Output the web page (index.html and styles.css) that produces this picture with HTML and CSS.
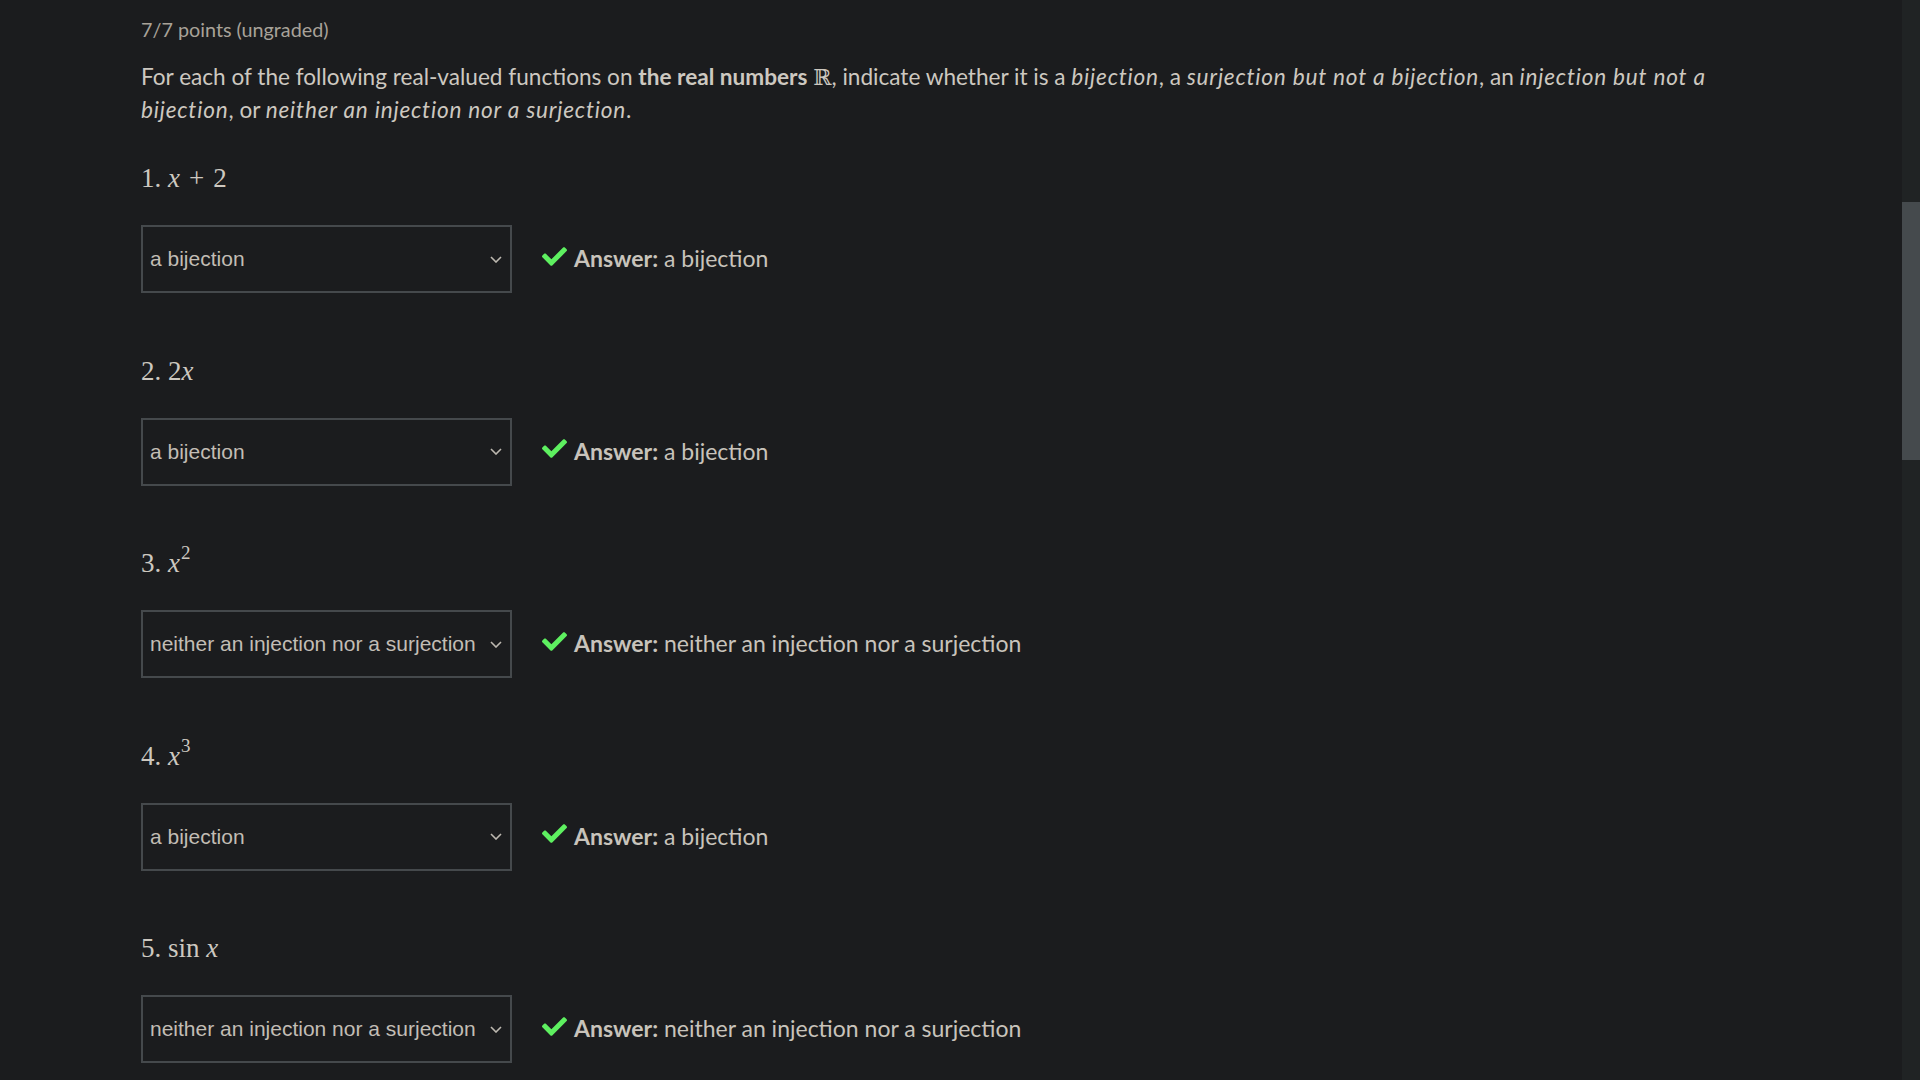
FILE: index.html
```html
<!DOCTYPE html>
<html lang="en">
<head>
<meta charset="utf-8">
<title>Problem</title>
<link rel="stylesheet" href="styles.css">
</head>
<body>
<main class="problem">
  <div class="points">7/7 points (ungraded)</div>
  <p class="prompt">For each of the following real-valued functions on <strong>the real numbers</strong> <span class="math">ℝ</span>, indicate whether it is a <em>bijection</em>, a <em>surjection but not a bijection</em>, an <em>injection but not a bijection</em>, or <em>neither an injection nor a surjection</em>.</p>

  <section class="item">
    <div class="label"><span class="math">1. <i>x</i><span class="op">+</span>2</span></div>
    <div class="row">
      <div class="select"><span class="value">a bijection</span><svg class="chev" viewBox="0 0 12 7" width="12" height="7"><path d="M1 1l5 5 5-5" fill="none" stroke="currentColor" stroke-width="1.6"/></svg></div>
      <div class="answer"><svg class="check" viewBox="0 64 512 384" width="25" height="19"><path d="M173.898 439.404l-166.4-166.4c-9.997-9.997-9.997-26.206 0-36.204l36.203-36.204c9.997-9.998 26.207-9.998 36.204 0L192 312.69 432.095 72.596c9.997-9.997 26.207-9.997 36.204 0l36.203 36.204c9.997 9.997 9.997 26.206 0 36.204l-294.4 294.401c-9.998 9.997-26.207 9.997-36.204-.001z" fill="currentColor"/></svg><b>Answer:</b> a bijection</div>
    </div>
  </section>

  <section class="item">
    <div class="label"><span class="math">2. 2<i>x</i></span></div>
    <div class="row">
      <div class="select"><span class="value">a bijection</span><svg class="chev" viewBox="0 0 12 7" width="12" height="7"><path d="M1 1l5 5 5-5" fill="none" stroke="currentColor" stroke-width="1.6"/></svg></div>
      <div class="answer"><svg class="check" viewBox="0 64 512 384" width="25" height="19"><path d="M173.898 439.404l-166.4-166.4c-9.997-9.997-9.997-26.206 0-36.204l36.203-36.204c9.997-9.998 26.207-9.998 36.204 0L192 312.69 432.095 72.596c9.997-9.997 26.207-9.997 36.204 0l36.203 36.204c9.997 9.997 9.997 26.206 0 36.204l-294.4 294.401c-9.998 9.997-26.207 9.997-36.204-.001z" fill="currentColor"/></svg><b>Answer:</b> a bijection</div>
    </div>
  </section>

  <section class="item">
    <div class="label"><span class="math">3. <i>x</i><sup>2</sup></span></div>
    <div class="row">
      <div class="select"><span class="value">neither an injection nor a surjection</span><svg class="chev" viewBox="0 0 12 7" width="12" height="7"><path d="M1 1l5 5 5-5" fill="none" stroke="currentColor" stroke-width="1.6"/></svg></div>
      <div class="answer"><svg class="check" viewBox="0 64 512 384" width="25" height="19"><path d="M173.898 439.404l-166.4-166.4c-9.997-9.997-9.997-26.206 0-36.204l36.203-36.204c9.997-9.998 26.207-9.998 36.204 0L192 312.69 432.095 72.596c9.997-9.997 26.207-9.997 36.204 0l36.203 36.204c9.997 9.997 9.997 26.206 0 36.204l-294.4 294.401c-9.998 9.997-26.207 9.997-36.204-.001z" fill="currentColor"/></svg><b>Answer:</b> neither an injection nor a surjection</div>
    </div>
  </section>

  <section class="item">
    <div class="label"><span class="math">4. <i>x</i><sup>3</sup></span></div>
    <div class="row">
      <div class="select"><span class="value">a bijection</span><svg class="chev" viewBox="0 0 12 7" width="12" height="7"><path d="M1 1l5 5 5-5" fill="none" stroke="currentColor" stroke-width="1.6"/></svg></div>
      <div class="answer"><svg class="check" viewBox="0 64 512 384" width="25" height="19"><path d="M173.898 439.404l-166.4-166.4c-9.997-9.997-9.997-26.206 0-36.204l36.203-36.204c9.997-9.998 26.207-9.998 36.204 0L192 312.69 432.095 72.596c9.997-9.997 26.207-9.997 36.204 0l36.203 36.204c9.997 9.997 9.997 26.206 0 36.204l-294.4 294.401c-9.998 9.997-26.207 9.997-36.204-.001z" fill="currentColor"/></svg><b>Answer:</b> a bijection</div>
    </div>
  </section>

  <section class="item">
    <div class="label"><span class="math">5. sin <i>x</i></span></div>
    <div class="row">
      <div class="select"><span class="value">neither an injection nor a surjection</span><svg class="chev" viewBox="0 0 12 7" width="12" height="7"><path d="M1 1l5 5 5-5" fill="none" stroke="currentColor" stroke-width="1.6"/></svg></div>
      <div class="answer"><svg class="check" viewBox="0 64 512 384" width="25" height="19"><path d="M173.898 439.404l-166.4-166.4c-9.997-9.997-9.997-26.206 0-36.204l36.203-36.204c9.997-9.998 26.207-9.998 36.204 0L192 312.69 432.095 72.596c9.997-9.997 26.207-9.997 36.204 0l36.203 36.204c9.997 9.997 9.997 26.206 0 36.204l-294.4 294.401c-9.998 9.997-26.207 9.997-36.204-.001z" fill="currentColor"/></svg><b>Answer:</b> neither an injection nor a surjection</div>
    </div>
  </section>
</main>
<div class="scrollbar"><div class="thumb"></div></div>
</body>
</html>
```

FILE: styles.css
```css
html, body {
  margin: 0;
  padding: 0;
  background: #1b1c1e;
  overflow: hidden;
  height: 100%;
}
body {
  font-family: Lato, "Open Sans", sans-serif;
  color: #cdc8c0;
}
.problem {
  padding: 15px 0 0 141px;
  width: 1600px;
}
.points {
  font-size: 19.8px;
  line-height: 28px;
  color: #a8a299;
}
.prompt {
  margin: 17px 0 0;
  font-size: 22.6px;
  line-height: 33px;
}
.prompt strong { font-weight: 700; }
.prompt em { letter-spacing: 0.8px; }
.prompt .math { font-family: "DejaVu Serif", serif; font-size: 22px; line-height: 0; }
.item .label {
  margin-top: 32px;
  height: 40px;
  line-height: 40px;
  font-family: "Liberation Serif", serif;
  font-size: 27px;
  color: #cdc8c0;
}
.item + .item .label { margin-top: 57.5px; }
.label .op { margin: 0 9px; }
.label sup {
  font-size: 19px;
  line-height: 0;
  vertical-align: 13px;
  margin-left: 1px;
}
.row {
  margin-top: 27px;
  display: flex;
  align-items: center;
  gap: 30px;
}
.select {
  box-sizing: border-box;
  width: 371px;
  height: 68px;
  border: 2px solid #45494c;
  display: flex;
  align-items: center;
  justify-content: space-between;
  padding: 0 8px 0 7px;
  font-family: "Liberation Sans", Arial, sans-serif;
  font-size: 21px;
  color: #c2bdb5;
}
.chev { color: #bdb8b0; flex: none; }
.answer {
  display: flex;
  align-items: center;
  font-size: 23px;
  color: #c8c3bb;
  white-space: pre;
  position: relative;
  top: -1px;
}
.answer b { font-weight: 700; }
.check { color: #5ef060; margin-right: 7px; position: relative; top: -2px; }
.scrollbar {
  position: fixed;
  top: 0;
  right: 0;
  width: 18px;
  height: 100%;
  background: #202324;
}
.thumb {
  margin-top: 202px;
  height: 258px;
  background: #454a4d;
}
```
